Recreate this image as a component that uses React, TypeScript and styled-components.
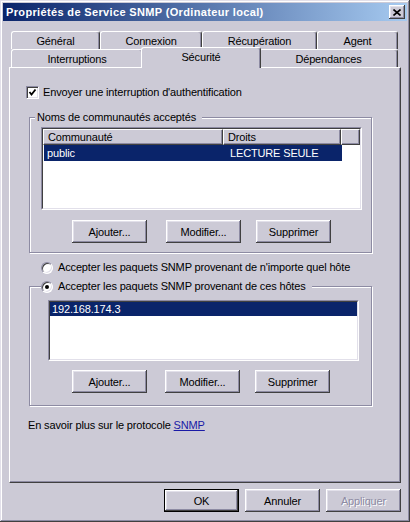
import styled, { createGlobalStyle } from 'styled-components';

const FACE = '#cccad6';
const SHADOW = '#8d8ba3';
const DARK = '#404040';
const LIGHT = '#e2e0ea';
const NAVY = '#0a246a';

const GlobalStyle = createGlobalStyle`
  * { box-sizing: border-box; }
  html, body { margin: 0; padding: 0; background: ${FACE}; }
  body {
    font-family: "Liberation Sans", Arial, sans-serif;
    font-size: 11px;
    letter-spacing: -0.15px;
    color: #000;
  }
`;

const topTabs = [
  { label: 'Général', w: 89 },
  { label: 'Connexion', w: 102 },
  { label: 'Récupération', w: 115 },
  { label: 'Agent', w: 81 },
];

const frontTabs = [
  { label: 'Interruptions', w: 132 },
  { label: 'Sécurité', w: 116, active: true },
  { label: 'Dépendances', w: 139 },
];

function CheckMark() {
  return (
    <svg width="9" height="9" viewBox="0 0 9 9">
      <path d="M1.5 4 L3.5 6.5 L7.5 1.5" fill="none" stroke="#000" strokeWidth="1.8" />
    </svg>
  );
}

function CloseGlyph() {
  return (
    <svg width="8" height="7" viewBox="0 0 8 7">
      <path d="M0.5 0.5 L7.5 6.5 M7.5 0.5 L0.5 6.5" stroke="#000" strokeWidth="1.6" />
    </svg>
  );
}

function App() {
  return (
    <>
      <GlobalStyle />
      <Window>
        <TitleBar>
          <Title>Propriétés de Service SNMP (Ordinateur local)</Title>
          <CloseBtn>
            <CloseGlyph />
          </CloseBtn>
        </TitleBar>

        <Body>
          <TabStrip>
            <TabRow>
              {topTabs.map((t) => (
                <Tab key={t.label} $w={t.w}>
                  {t.label}
                </Tab>
              ))}
            </TabRow>
            <TabRow>
              {frontTabs.map((t) => (
                <Tab key={t.label} $w={t.w} $active={t.active}>
                  {t.label}
                </Tab>
              ))}
            </TabRow>
          </TabStrip>

          <Panel>
            <CheckRow>
              <CheckBox>
                <CheckMark />
              </CheckBox>
              Envoyer une interruption d'authentification
            </CheckRow>

            <GroupBox $mt={12}>
              <Legend $ml={5}>Noms de communautés acceptés</Legend>
              <Sunken $mt={3} $ml={11} $w={321} $h={83}>
                <SunkenInner>
                  <Header>
                    <HeaderCell $w={180}>Communauté</HeaderCell>
                    <HeaderCell $w={118}>Droits</HeaderCell>
                    <HeaderCell $w={0} />
                  </Header>
                  <ListRow>
                    <Cell $w={179}>public</Cell>
                    <Cell $w={119}>LECTURE SEULE</Cell>
                  </ListRow>
                </SunkenInner>
              </Sunken>
              <ButtonRow $mt={10} $mb={9}>
                <Button>Ajouter...</Button>
                <Button $ml={19}>Modifier...</Button>
                <Button $ml={15}>Supprimer</Button>
              </ButtonRow>
            </GroupBox>

            <RadioRow>
              <Radio />
              Accepter les paquets SNMP provenant de n'importe quel hôte
            </RadioRow>

            <GroupBox $mt={6}>
              <Legend $ml={11} $radio>
                <Radio $checked />
                Accepter les paquets SNMP provenant de ces hôtes
              </Legend>
              <Sunken $mt={7} $ml={18} $w={311} $h={61}>
                <SunkenInner>
                  <HostRow>192.168.174.3</HostRow>
                </SunkenInner>
              </Sunken>
              <ButtonRow $mt={9} $mb={12}>
                <Button>Ajouter...</Button>
                <Button $ml={18}>Modifier...</Button>
                <Button $ml={15}>Supprimer</Button>
              </ButtonRow>
            </GroupBox>

            <InfoLine>
              En savoir plus sur le protocole <Link>SNMP</Link>
            </InfoLine>
          </Panel>

          <Footer>
            <Button $default>OK</Button>
            <Button>Annuler</Button>
            <Button $disabled>Appliquer</Button>
          </Footer>
        </Body>
      </Window>
    </>
  );
}

export default App;

const Window = styled.div`
  width: 410px;
  height: 522px;
  padding: 3px;
  background: ${FACE};
  box-shadow: inset -1px -1px ${DARK}, inset 1px 1px ${LIGHT}, inset -2px -2px ${SHADOW},
    inset 2px 2px #fff;
  display: flex;
  flex-direction: column;
`;

const TitleBar = styled.div`
  height: 18px;
  display: flex;
  align-items: center;
  justify-content: space-between;
  padding: 0 2px 0 3px;
  background: linear-gradient(to right, ${NAVY}, #a6caf0);
`;

const Title = styled.div`
  color: #fff;
  font-weight: bold;
  font-size: 11px;
  letter-spacing: 0.35px;
  white-space: nowrap;
`;

const CloseBtn = styled.div`
  width: 16px;
  height: 14px;
  display: flex;
  align-items: center;
  justify-content: center;
  background: ${FACE};
  box-shadow: inset -1px -1px ${DARK}, inset 1px 1px #fff, inset -2px -2px ${SHADOW},
    inset 2px 2px ${LIGHT};
`;

const Body = styled.div`
  flex: 1;
  display: flex;
  flex-direction: column;
  padding: 10px 6px 7px;
`;

const TabStrip = styled.div`
  display: flex;
  flex-direction: column;
  padding: 0 2px;
`;

const TabRow = styled.div`
  display: flex;
  height: 18px;
`;

const Tab = styled.div<{ $w: number; $active?: boolean }>`
  width: ${(p) => (p.$active ? p.$w + 4 : p.$w)}px;
  height: ${(p) => (p.$active ? 21 : 18)}px;
  margin: ${(p) => (p.$active ? '-2px -2px -1px' : '0')};
  position: relative;
  z-index: ${(p) => (p.$active ? 1 : 0)};
  display: flex;
  align-items: center;
  justify-content: center;
  padding-bottom: ${(p) => (p.$active ? 3 : 0)}px;
  background: ${FACE};
  border-top: 1px solid #fff;
  border-left: 1px solid #fff;
  border-right: 1px solid ${DARK};
  border-radius: 3px 3px 0 0;
  box-shadow: inset -1px 0 ${SHADOW};
  white-space: nowrap;
`;

const Panel = styled.div`
  flex: 1;
  display: flex;
  flex-direction: column;
  align-items: flex-start;
  padding: 18px 0 0 16px;
  border: 1px solid;
  border-color: #fff ${DARK} ${DARK} #fff;
  box-shadow: inset -1px -1px ${SHADOW};
`;

const CheckRow = styled.div`
  display: flex;
  align-items: center;
  gap: 4px;
  height: 13px;
  line-height: 13px;
`;

const CheckBox = styled.div`
  width: 13px;
  height: 13px;
  display: flex;
  align-items: center;
  justify-content: center;
  background: #fff;
  border: 1px solid;
  border-color: ${SHADOW} #fff #fff ${SHADOW};
  box-shadow: inset 1px 1px ${DARK}, inset -1px -1px ${LIGHT};
`;

const GroupBox = styled.fieldset<{ $mt: number }>`
  width: 343px;
  margin: ${(p) => p.$mt}px 0 0 3px;
  padding: 0;
  border: 1px solid ${SHADOW};
  box-shadow: inset 1px 1px #fff, 1px 1px #fff;
  min-width: 0;
`;

const Legend = styled.legend<{ $ml: number; $radio?: boolean }>`
  margin-left: ${(p) => p.$ml}px;
  padding: ${(p) => (p.$radio ? '0 6px 0 0' : '0 6px 0 2px')};
  line-height: 13px;
  height: 13px;
  background: ${FACE};
  display: flex;
  align-items: center;
  gap: 5px;
`;

const Sunken = styled.div<{ $mt: number; $ml: number; $w: number; $h: number }>`
  margin: ${(p) => p.$mt}px 0 0 ${(p) => p.$ml}px;
  width: ${(p) => p.$w}px;
  height: ${(p) => p.$h}px;
  border: 1px solid;
  border-color: ${SHADOW} #fff #fff ${SHADOW};
`;

const SunkenInner = styled.div`
  height: 100%;
  background: #fff;
  border: 1px solid;
  border-color: ${DARK} ${LIGHT} ${LIGHT} ${DARK};
`;

const Header = styled.div`
  display: flex;
  height: 16px;
`;

const HeaderCell = styled.div<{ $w: number }>`
  ${(p) => (p.$w ? `width: ${p.$w}px;` : 'flex: 1;')}
  height: 16px;
  line-height: 14px;
  padding-left: 4px;
  background: ${FACE};
  border-top: 1px solid #fff;
  border-left: 1px solid #fff;
  border-right: 1px solid ${DARK};
  border-bottom: 1px solid ${DARK};
  box-shadow: inset -1px -1px ${SHADOW};
  white-space: nowrap;
`;

const ListRow = styled.div`
  display: flex;
  width: 298px;
  height: 16px;
  margin: 0 0 0 1px;
  background: ${NAVY};
  color: #fff;
`;

const Cell = styled.div<{ $w: number }>`
  width: ${(p) => p.$w}px;
  line-height: 16px;
  padding-left: 3px;
  white-space: nowrap;
  & + & {
    padding-left: 7px;
  }
`;

const HostRow = styled.div`
  height: 14px;
  line-height: 14px;
  padding-left: 2px;
  background: ${NAVY};
  color: #fff;
`;

const ButtonRow = styled.div<{ $mt: number; $mb: number }>`
  display: flex;
  padding-left: 42px;
  margin: ${(p) => p.$mt}px 0 ${(p) => p.$mb}px;
`;

const Button = styled.button<{ $ml?: number; $default?: boolean; $disabled?: boolean }>`
  width: 75px;
  height: 23px;
  margin-left: ${(p) => p.$ml ?? 0}px;
  padding: 0;
  font: inherit;
  letter-spacing: inherit;
  color: ${(p) => (p.$disabled ? SHADOW : '#000')};
  text-shadow: ${(p) => (p.$disabled ? '1px 1px #fff' : 'none')};
  background: ${FACE};
  border: ${(p) => (p.$default ? '1px solid #000' : 'none')};
  box-shadow: inset -1px -1px ${DARK}, inset 1px 1px #fff, inset -2px -2px ${SHADOW},
    inset 2px 2px ${LIGHT};
`;

const RadioRow = styled.div`
  display: flex;
  align-items: center;
  gap: 5px;
  height: 13px;
  line-height: 13px;
  margin: 8px 0 0 15px;
`;

const Radio = styled.div<{ $checked?: boolean }>`
  width: 12px;
  height: 12px;
  flex: none;
  border-radius: 50%;
  background: #fff;
  border: 1px solid;
  border-color: ${SHADOW} #fff #fff ${SHADOW};
  box-shadow: inset 1px 1px ${DARK}, inset -1px -1px ${LIGHT};
  display: flex;
  align-items: center;
  justify-content: center;
  &::after {
    content: '';
    width: 4px;
    height: 4px;
    border-radius: 50%;
    background: ${(p) => (p.$checked ? '#000' : 'transparent')};
  }
`;

const InfoLine = styled.div`
  margin: 13px 0 0 2px;
  line-height: 13px;
`;

const Link = styled.span`
  color: #1a1aa6;
  text-decoration: underline;
`;

const Footer = styled.div`
  display: flex;
  justify-content: flex-end;
  gap: 6px;
  margin-top: 6px;
`;
